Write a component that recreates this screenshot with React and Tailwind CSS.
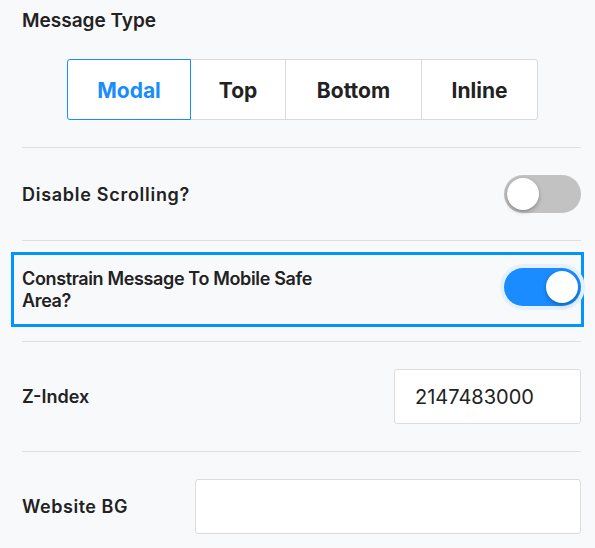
import React, { useState } from "react";

const font = { fontFamily: "Inter, 'Open Sans', sans-serif" };

function Toggle({ on, onChange, className = "" }) {
  return (
    <button
      onClick={() => onChange(!on)}
      className={
        "relative w-[77px] h-[38px] rounded-full shrink-0 transition-colors " +
        (on ? "bg-[#1a8cff] ring-4 ring-[#e3f1ff] " : "bg-[#c2c2c2] ") +
        className
      }
    >
      <span
        className={
          "absolute top-[3px] w-[32px] h-[32px] rounded-full bg-white shadow-[0_2px_4px_rgba(0,0,0,0.3)] " +
          (on ? "left-[42px]" : "left-[3px]")
        }
      />
    </button>
  );
}

export default function App() {
  const [type, setType] = useState("Modal");
  const [noScroll, setNoScroll] = useState(false);
  const [safeArea, setSafeArea] = useState(true);
  const types = [
    { name: "Modal", w: "w-[124px]" },
    { name: "Top", w: "w-[96px]" },
    { name: "Bottom", w: "w-[137px]" },
    { name: "Inline", w: "w-[117px]" },
  ];

  return (
    <div className="min-h-[548px] bg-[#f8f9fb] pl-[22px] pr-[14px] text-[#222]" style={font}>
      <div className="pt-[9px] text-[19px] font-semibold leading-[24px]">Message Type</div>

      {/* segmented control */}
      <div className="flex pl-[45px] mt-[26px]">
        {types.map((t, i) => {
          const active = type === t.name;
          return (
            <button
              key={t.name}
              onClick={() => setType(t.name)}
              style={{ borderColor: active ? "#1a8cff" : "#d9d9d9" }}
              className={
                t.w +
                " h-[61px] pt-[3px] bg-white text-[21px] font-bold border-[1.5px] " +
                (i === 0 ? "rounded-l-[3px] " : "-ml-px ") +
                (i === types.length - 1 ? "rounded-r-[3px] " : "") +
                (active ? "text-[#1a8cff] relative z-10" : "text-[#222]")
              }
            >
              {t.name}
            </button>
          );
        })}
      </div>

      <div className="mt-[27px] border-t border-[#dedfe2]" />

      <div className="h-[92px] flex items-center justify-between">
        <span className="text-[18px] font-semibold tracking-[0.04em]">Disable Scrolling?</span>
        <Toggle on={noScroll} onChange={setNoScroll} />
      </div>

      <div className="border-t border-[#dedfe2]" />

      <div className="mt-[11px] -ml-[11px] -mr-[3px] border-[3px] border-[#0095ff] h-[75px] pl-[8px] flex items-center justify-between">
        <span className="text-[18px] font-semibold leading-[22px] w-[340px] tracking-[-0.02em]">
          Constrain Message To Mobile Safe Area?
        </span>
        <Toggle on={safeArea} onChange={setSafeArea} className="mb-[6px]" />
      </div>

      <div className="mt-[14px] border-t border-[#dedfe2]" />

      <div className="h-[109px] flex items-center justify-between">
        <span className="text-[18px] font-semibold">Z-Index</span>
        <input
          defaultValue="2147483000"
          className="w-[187px] h-[55px] bg-white border border-[#dcdcdc] rounded-[3px] px-[20px] text-[20px] text-[#222] outline-none"
        />
      </div>

      <div className="border-t border-[#dedfe2]" />

      <div className="h-[109px] flex items-center justify-between">
        <span className="text-[18px] font-semibold tracking-[0.03em]">Website BG</span>
        <input className="w-[386px] h-[55px] bg-white border border-[#dcdcdc] rounded-[3px] px-[20px] text-[20px] outline-none" />
      </div>
    </div>
  );
}
